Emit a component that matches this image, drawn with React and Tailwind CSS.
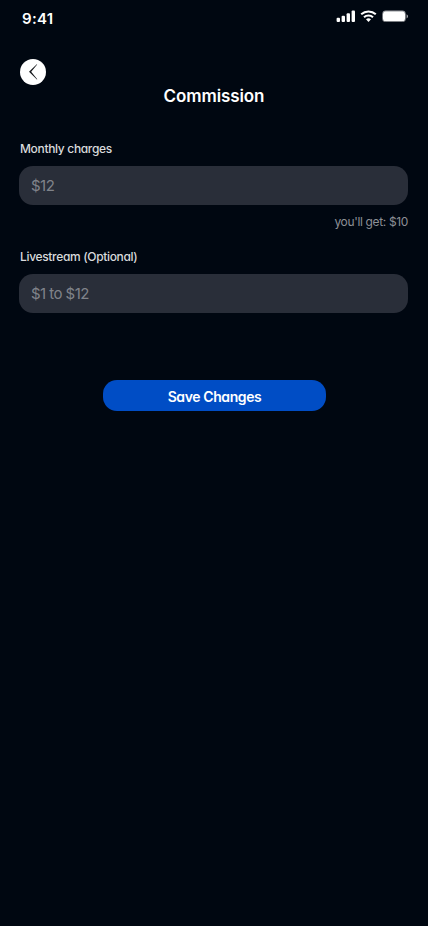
import React from "react";

function StatusBar() {
  return (
    <div className="flex h-[38px] items-start justify-between pt-[10px] pl-[22px] pr-[20px]">
      <span className="text-[15px] leading-[18px] font-semibold tracking-[0.3px]">9:41</span>
      <svg width="72" height="12" viewBox="0 0 72 12" fill="#fff" aria-hidden="true">
        <rect x="0.6" y="7.8" width="3.4" height="4.2" rx="1" />
        <rect x="5.6" y="5.8" width="3.4" height="6.2" rx="1" />
        <rect x="10.6" y="3.2" width="3.4" height="8.8" rx="1" />
        <rect x="15.6" y="0.6" width="3.4" height="11.4" rx="1" />
        <g fill="none" stroke="#fff" strokeWidth="2.1">
          <path d="M25.2 4.2a11 11 0 0 1 14.6 0" />
          <path d="M28 7.3a6.7 6.7 0 0 1 9 0" />
        </g>
        <path d="M30 9.3a3.9 3.9 0 0 1 5 0l-2.5 2.6z" />
        <rect x="46.5" y="0.8" width="23" height="11" rx="3" fill="none" stroke="#fff" strokeOpacity="0.45" />
        <rect x="47" y="1.3" width="22" height="10" rx="2.3" />
        <path d="M70.6 4.2c1.8.9 1.8 3.3 0 4.2z" fillOpacity="0.7" />
      </svg>
    </div>
  );
}

function Field({ id, label, placeholder }) {
  return (
    <div className="flex flex-col">
      <label htmlFor={id} className="pl-px text-[12px] leading-[16px] font-medium tracking-[-0.33px] text-[#d9dadc]">
        {label}
      </label>
      <input
        id={id}
        placeholder={placeholder}
        className="mt-[9px] h-[39px] w-full rounded-[14px] bg-[#292e39] px-3 text-[15px] tracking-[-0.55px] text-white outline-none placeholder:text-[#80838a]"
      />
    </div>
  );
}

export default function App() {
  return (
    <div className="min-h-[926px] w-full bg-[#000711] font-['Inter',sans-serif] text-white [font-feature-settings:'cv11']">
      <StatusBar />
      <button aria-label="Back" className="mt-[21px] ml-5 flex size-[26px] items-center justify-center rounded-full bg-white">
        <svg width="26" height="26" viewBox="0 0 26 26" aria-hidden="true">
          <path d="M16.8 5.2 9 12.8l7.9 7.8.4-.4-6.1-7.4 6-7.2z" fill="#16181c" />
        </svg>
      </button>
      <h1 className="-mt-px text-center text-[17px] leading-[24px] font-semibold tracking-[-0.1px]">Commission</h1>
      <main className="flex flex-col pt-[33px] pr-5 pl-[19px]">
        <Field id="monthly" label="Monthly charges" placeholder="$12" />
        <p className="mt-[9px] text-right text-[12px] leading-[16px] tracking-[-0.35px] text-[#8d9096]">you'll get: $10</p>
        <div className="mt-[19px]">
          <Field id="livestream" label="Livestream (Optional)" placeholder="$1 to $12" />
        </div>
        <button className="mt-[67px] ml-[84px] h-[31px] w-[223px] rounded-[14px] bg-[#004dc5] pt-px text-[14px] font-semibold tracking-[-0.4px]">
          Save Changes
        </button>
      </main>
    </div>
  );
}
